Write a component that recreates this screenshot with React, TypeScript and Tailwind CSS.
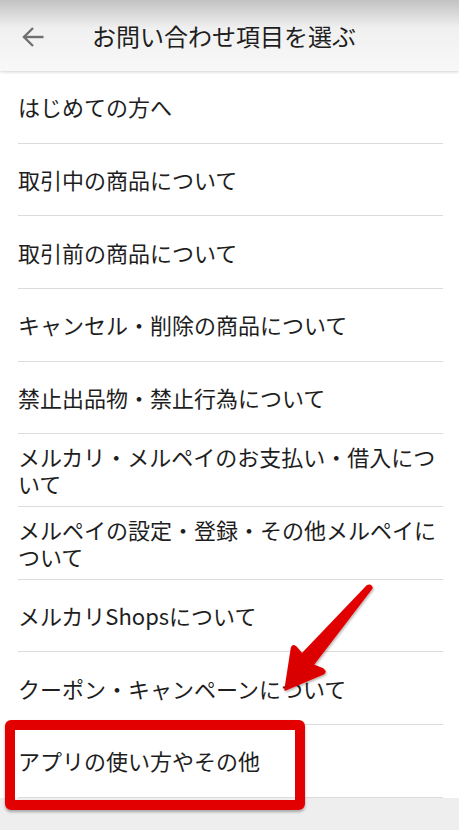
import React from "react";

const items: string[] = [
  "はじめての方へ",
  "取引中の商品について",
  "取引前の商品について",
  "キャンセル・削除の商品について",
  "禁止出品物・禁止行為について",
  "メルカリ・メルペイのお支払い・借入について",
  "メルペイの設定・登録・その他メルペイについて",
  "メルカリShopsについて",
  "クーポン・キャンペーンについて",
  "アプリの使い方やその他",
];

export default function App() {
  return (
    <div
      className="relative w-[459px] h-[830px] overflow-hidden bg-[#eeeeee]"
      style={{ fontFamily: '"Noto Sans CJK JP", "Noto Sans", sans-serif' }}
    >
      <header className="relative z-10 h-[71px] flex items-center bg-[linear-gradient(to_bottom,#c2c2c2_0px,#f0f0f0_28px,#f8f8f8_71px)] shadow-[0_1px_3px_rgba(0,0,0,0.18)]">
        <div className="w-[92px] pl-[22px] pt-[2px] flex items-center">
          <svg width="22" height="20" viewBox="0 0 22 20" fill="none" stroke="#707070" strokeWidth="2.4" strokeLinecap="butt">
            <path d="M1.5 10 H21.5" />
            <path d="M11 1 L2 10 L11 19" />
          </svg>
        </div>
        <h1 className="text-[24px] leading-none text-[#1e1e1e] pt-[1px] font-normal">お問い合わせ項目を選ぶ</h1>
      </header>
      <ul className="bg-white pl-[18px] pr-[16px]">
        {items.map((t, i) => (
          <li
            key={i}
            className="h-[72.67px] border-b border-[#dcdcdc] flex items-center text-[22px] leading-[27px] text-[#1e1e1e]"
          >
            <p className="w-full">{t}</p>
          </li>
        ))}
      </ul>
      <div className="absolute left-[5px] top-[720px] w-[300px] h-[90px] border-[10px] border-[#e30000] rounded-[6px] shadow-[0_2px_3px_rgba(0,0,0,0.3)]" />
      <svg className="absolute left-0 top-0" width="459" height="830" viewBox="0 0 459 830">
        <defs>
          <linearGradient id="ag" x1="370" y1="587" x2="285" y2="690" gradientUnits="userSpaceOnUse">
            <stop offset="0" stopColor="#e60000" />
            <stop offset="1" stopColor="#d60000" />
          </linearGradient>
          <filter id="sh" x="-20%" y="-20%" width="140%" height="140%">
            <feDropShadow dx="1" dy="1.5" stdDeviation="1.2" floodColor="#000" floodOpacity="0.3" />
          </filter>
        </defs>
        <path
          d="M285 690 L291.5 648 Q293 644 296 647 L302 654 L367 586 Q371 584 372 588 L313 665 L323 669 Q327 672 323 674 Z"
          fill="url(#ag)"
          stroke="#e00000"
          strokeWidth="1.5"
          strokeLinejoin="round"
          filter="url(#sh)"
        />
      </svg>
    </div>
  );
}
